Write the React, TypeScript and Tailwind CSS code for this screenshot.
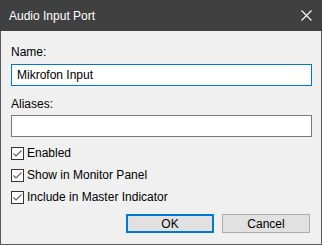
import { useState } from "react";

const CheckRow = ({ label, checked }: { label: string; checked: boolean }) => {
    const [on, setOn] = useState(checked);
    return (
        <div className="flex items-center h-[22px] cursor-default" onClick={() => setOn(!on)}>
            <span className="w-[13px] h-[13px] border border-[#333333] bg-white flex items-center justify-center">
                {on && (
                    <svg width="11" height="11" viewBox="0 0 11 11">
                        <path d="M1.5 5.5 L4 8 L9.5 2.5" stroke="#606060" strokeWidth="1.1" fill="none" />
                    </svg>
                )}
            </span>
            <span className="ml-[3px]">{label}</span>
        </div>
    );
};

const App = () => {
    const [name, setName] = useState("Mikrofon Input");
    const [aliases, setAliases] = useState("");

    return (
        <div className="w-[322px] h-[245px] flex flex-col bg-[#f0f0f0] text-[12px] text-black font-['Liberation_Sans',Arial,sans-serif]">
            {/* Title bar */}
            <div className="h-[31px] bg-[#404040] text-white flex items-center justify-between pl-[9px] pr-[10px] shrink-0">
                <span className="text-[12px]">Audio Input Port</span>
                <svg width="11" height="11" viewBox="0 0 11 11">
                    <path d="M0.5 0.5 L10.5 10.5 M10.5 0.5 L0.5 10.5" stroke="#ffffff" strokeWidth="1.1" />
                </svg>
            </div>

            {/* Body */}
            <div className="flex-1 flex flex-col border-x border-b border-[#5a5a5a] pl-[10px] pr-[9px] pt-[13px]">
                <label className="leading-[16px]">Name:</label>
                <input
                    value={name}
                    onChange={(e) => setName(e.target.value)}
                    className="mt-[4px] h-[22px] w-[301px] border border-[#0078d7] bg-white px-[5px] outline-none"
                />
                <label className="mt-[10px] leading-[16px]">Aliases:</label>
                <input
                    value={aliases}
                    onChange={(e) => setAliases(e.target.value)}
                    className="mt-[3px] h-[22px] w-[301px] border border-[#7a7a7a] bg-white px-[5px] outline-none"
                />

                <div className="mt-[5px] flex flex-col">
                    <CheckRow label="Enabled" checked />
                    <CheckRow label="Show in Monitor Panel" checked />
                    <CheckRow label="Include in Master Indicator" checked />
                </div>

                <div className="mt-[6px] flex justify-end gap-[8px] pr-[2px]">
                    <button className="w-[88px] h-[19px] bg-[#e1e1e1] border-2 border-[#0078d7] leading-none">OK</button>
                    <button className="w-[88px] h-[19px] bg-[#e1e1e1] border border-[#adadad] leading-none">Cancel</button>
                </div>
            </div>
        </div>
    );
};

export default App;
